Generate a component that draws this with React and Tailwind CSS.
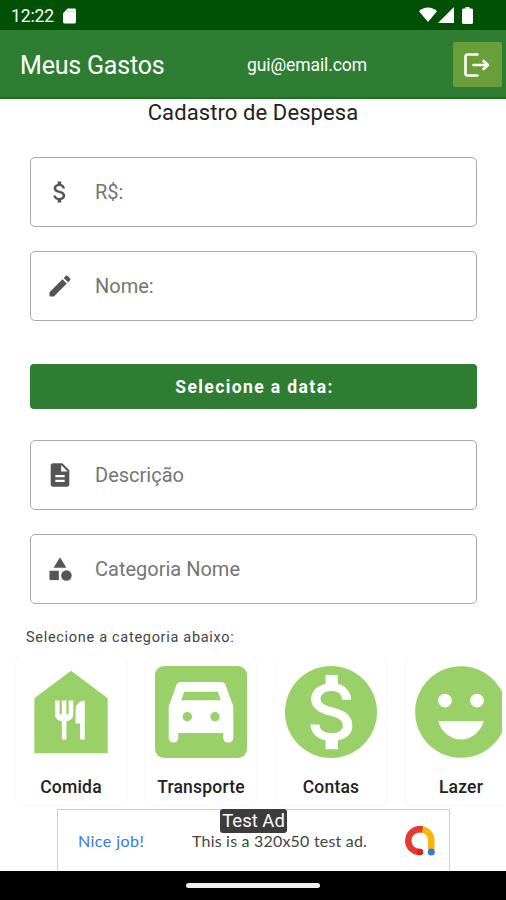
import { MdAttachMoney, MdCategory, MdDescription, MdEdit, MdEmojiEmotions, MdFoodBank } from 'react-icons/md';

const StatusBar = () => {
  return (
    <div className="flex h-[30px] items-center bg-[#005005] pl-[11px] pr-8 text-white">
      <span className="w-[43px] whitespace-nowrap pt-1 text-[17.5px] leading-none tracking-[-0.1px]">12:22</span>
      <svg className="ml-[9px] mt-px h-4 w-[13px]" viewBox="0 0 14 16" fill="currentColor">
        <path d="M5 0h7.5C13.3 0 14 .7 14 1.500v13c0 .8-.7 1.500-1.500 1.500h-11C.7 16 0 15.300 0 14.500V5z" />
        <path d="M6 2v2M8.500 2v2M11 2v2" stroke="#b8c8b8" strokeWidth="1" />
      </svg>
      <div className="ml-auto flex items-center">
        <svg className="h-4 w-[18px]" viewBox="0 0 19 16" fill="currentColor">
          <path d="M0 4C5.500-1.200 13.500-1.200 19 4L9.500 15.500z" />
        </svg>
        <svg className="ml-px h-4 w-4" viewBox="0 0 16 16" fill="currentColor">
          <path d="M16 0v16H0z" />
        </svg>
        <svg className="ml-2 mr-px h-[17px] w-[11px]" viewBox="0 0 11 17" fill="currentColor">
          <path d="M3.500 0h4v1.500h2c.8 0 1.500.7 1.500 1.500v12.500c0 .8-.7 1.500-1.500 1.500h-8C.7 17 0 16.300 0 15.500V3c0-.8.7-1.500 1.500-1.500h2z" />
        </svg>
      </div>
    </div>
  );
};

const Toolbar = () => {
  return (
    <header className="flex h-[69px] items-center border-b-2 border-[#1b741f] bg-[#2e7d32] pl-5 pr-1 text-white">
      <h1 className="w-[227px] whitespace-nowrap pt-1 text-[25px] leading-none tracking-[-0.2px]">Meus Gastos</h1>
      <span className="whitespace-nowrap pt-1 text-[17.5px] leading-none tracking-[-0.1px]">gui@email.com</span>
      <button className="ml-auto mt-0.5 flex h-[45px] w-[49px] items-center justify-center rounded-[2px] bg-[#689f38] pr-0.5">
        <svg className="h-6 w-[26px]" viewBox="0 0 26 24" fill="none" stroke="currentColor" strokeWidth="2.600" strokeLinecap="round" strokeLinejoin="round">
          <path d="M13.500 1.500H3.500a2 2 0 0 0-2 2v17a2 2 0 0 0 2 2h10" />
          <path d="M9.500 12h14M19.500 8l4.500 4-4.500 4" />
        </svg>
      </button>
    </header>
  );
};

const Field = ({ icon: Icon, label }) => {
  return (
    <label className="flex h-[70px] items-center rounded-[5px] border-[1.5px] border-[#aaaaaa] pl-[15px]">
      <Icon className="h-7 w-7 text-[#555555]" />
      <span className="ml-[21px] text-[20px] leading-none text-[#757575]">{label}</span>
    </label>
  );
};

const CarIcon = ({ className }) => {
  return (
    <svg className={className} viewBox="0 0 110 110" fill="currentColor">
      <rect x="9" y="9" width="92" height="92" rx="9" />
      <path
        fill="white"
        d="M35 25h40a5 5 0 0 1 4.700 3.300l7.600 21V81a4.500 4.500 0 0 1-4.500 4.500h-1A4.500 4.500 0 0 1 77.300 81v-5h-45v5a4.500 4.500 0 0 1-4.500 4.500h-.6a4.500 4.500 0 0 1-4.500-4.500V49.300l7.600-21A5 5 0 0 1 35 25z"
      />
      <path d="M38.300 34.700h33.500l3 8.500H35.200z" />
      <circle cx="41.300" cy="59.700" r="4.700" />
      <circle cx="69" cy="59.700" r="4.700" />
    </svg>
  );
};

const MoneyIcon = ({ className }) => {
  return (
    <svg className={className} viewBox="0 0 110 110" fill="currentColor">
      <circle cx="55" cy="55" r="46" />
      <MdAttachMoney x="8.3" y="5.6" size={99} color="white" />
    </svg>
  );
};

const categories = [
  { name: 'Comida', icon: MdFoodBank },
  { name: 'Transporte', icon: CarIcon },
  { name: 'Contas', icon: MoneyIcon },
  { name: 'Lazer', icon: MdEmojiEmotions },
];

const CategoryCard = ({ name, icon: Icon }) => {
  return (
    <div className="flex h-[148px] w-[110px] shrink-0 flex-col items-center rounded-[5px] shadow-[0_0_2px_rgba(0,0,0,0.1)]">
      <Icon className="h-[110px] w-[110px] shrink-0 text-[#99d067]" />
      <span className="mt-3 text-[17.5px] font-medium leading-none tracking-[0.2px] text-[#222222]">{name}</span>
    </div>
  );
};

const AdBanner = () => {
  return (
    <div className="relative ml-[57px] flex h-[62px] w-[393px] items-center border border-b-0 border-[#cfcfcf] pl-5 pr-3.5 font-[Lato,sans-serif] text-[16px]">
      <span className="w-[114px] whitespace-nowrap tracking-[0.45px] text-[#3578e5]">Nice job!</span>
      <span className="whitespace-nowrap leading-none tracking-[0.2px] text-[#444444]">This is a 320x50 test ad.</span>
      <svg className="ml-auto h-[30px] w-[30px]" viewBox="0 0 30 30" fill="none" strokeWidth="6.500">
        <path d="M15 3.300c6.500 0 11.300 5 11.300 11.200v11" stroke="#fbb604" />
        <path d="M17.500 3.500C10 1.800 3.300 7.300 3.300 14.700c0 6.300 5 11.300 11.700 11.300" stroke="#e53a30" />
        <circle cx="15" cy="26" r="3.250" fill="#e02020" />
        <circle cx="26.300" cy="26" r="3.500" fill="#3379e4" />
      </svg>
      <span className="absolute -top-px left-[162px] flex h-6 w-[67px] items-center justify-center whitespace-nowrap rounded-[3px] bg-[#3c3c3c] pt-px font-[Roboto,sans-serif] text-[18.500px] leading-none text-white">
        Test Ad
      </span>
    </div>
  );
};

const App = () => {
  return (
    <div className="flex h-[900px] w-[506px] flex-col overflow-hidden bg-white font-[Roboto,sans-serif]">
      <StatusBar />
      <Toolbar />
      <main className="flex-1">
        <h2 className="pt-[3px] text-center text-[22px] leading-[22px] tracking-[0.1px] text-[#222222]">Cadastro de Despesa</h2>
        <form className="ml-[30px] mr-[29px] mt-[33px] flex flex-col">
          <Field icon={MdAttachMoney} label="R$:" />
          <div className="h-6" />
          <Field icon={MdEdit} label="Nome:" />
          <button type="button" className="mt-[43px] h-[45px] rounded-[4px] bg-[#2e7d32] pl-0.5 pt-0.5 text-[17.5px] font-bold leading-none tracking-[1.4px] text-white">
            Selecione a data:
          </button>
          <div className="mt-[31px] flex flex-col gap-6">
            <Field icon={MdDescription} label="Descrição" />
            <Field icon={MdCategory} label="Categoria Nome" />
          </div>
        </form>
        <p className="ml-[26px] mt-[25px] text-[14.5px] leading-[18px] tracking-[0.7px] text-[#444444]">Selecione a categoria abaixo:</p>
        <div className="ml-3 mr-1 mt-[10px] flex h-[152px] gap-5 overflow-hidden pl-1">
          {categories.map((category) => (
            <CategoryCard key={category.name} {...category} />
          ))}
        </div>
        <AdBanner />
      </main>
      <footer className="flex h-[29px] items-center justify-center bg-black">
        <div className="h-[5px] w-[134px] rounded-full bg-[#eeeeee]" />
      </footer>
    </div>
  );
};

export default App;
